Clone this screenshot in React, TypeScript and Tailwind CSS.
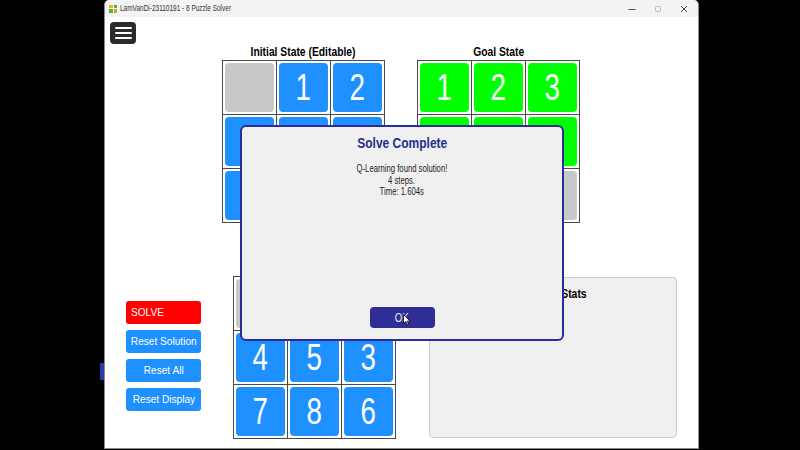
import React from "react";

function Board({ cells, color }: { cells: number[]; color: string }) {
  return (
    <div className="grid grid-cols-3 gap-[1px] bg-[#4a4a4a] p-[1px] w-fit">
      {cells.map((n, i) => (
        <div key={i} className="w-[53px] h-[53px] bg-white p-[2px]">
          <div
            className={`w-full h-full rounded-[4px] flex items-center justify-center ${
              n === 0 ? "bg-[#c8c8c8]" : color
            }`}
          >
            {n !== 0 && (
              <span className="inline-block scale-x-[0.75] text-white text-[37px] leading-none">{n}</span>
            )}
          </div>
        </div>
      ))}
    </div>
  );
}

function Btn({ label, bg, left }: { label: string; bg: string; left?: boolean }) {
  return (
    <div
      className={`w-[75px] h-[23px] rounded-[3px] flex items-center text-white text-[11px] ${bg} ${
        left ? "justify-start pl-[5px]" : "justify-center"
      }`}
    >
      <span className={`inline-block scale-x-[0.92] whitespace-nowrap ${left ? "origin-left" : ""}`}>{label}</span>
    </div>
  );
}

export default function App() {
  const initial = [0, 1, 2, 4, 5, 3, 7, 8, 6];
  const goal = [1, 2, 3, 4, 5, 6, 7, 8, 0];
  return (
    <div className="w-[800px] h-[450px] bg-black flex overflow-hidden font-['Liberation_Sans',Arial,sans-serif]">
      <div className="w-[100px] shrink-0" />
      <div className="w-[4px] shrink-0 flex flex-col">
        <div className="mt-[363px] h-[17px] bg-[#2a3aa8]" />
      </div>
      <div className="relative w-[595px] h-[449px] shrink-0 bg-white border border-t-0 border-[#8a8a8a] rounded-t-[5px] flex flex-col">
        {/* title bar */}
        <div className="h-[17px] bg-[#f3f3f3] rounded-t-[5px] flex items-center">
          <div className="ml-[4px] w-[8px] h-[8px] grid grid-cols-2 gap-[1px]">
            <div className="bg-[#e6b800]" />
            <div className="bg-[#4caf50]" />
            <div className="bg-[#4caf50]" />
            <div className="bg-[#d9a400]" />
          </div>
          <span className="ml-[3px] inline-block scale-x-[0.72] origin-left text-[9px] text-[#333] whitespace-nowrap">
            LamVanDi-23110191 - 8 Puzzle Solver
          </span>
          <div className="ml-auto flex items-center">
            <svg width="8" height="8" viewBox="0 0 8 8" className="mr-[18px]">
              <line x1="0.5" y1="4.5" x2="7.5" y2="4.5" stroke="#555" strokeWidth="1" />
            </svg>
            <svg width="8" height="8" viewBox="0 0 8 8" className="mr-[18px]">
              <rect x="1.5" y="1.5" width="5" height="5" rx="1" fill="none" stroke="#bbb" strokeWidth="1" />
            </svg>
            <svg width="8" height="8" viewBox="0 0 8 8" className="mr-[10px]">
              <line x1="1" y1="1" x2="7" y2="7" stroke="#444" strokeWidth="1" />
              <line x1="7" y1="1" x2="1" y2="7" stroke="#444" strokeWidth="1" />
            </svg>
          </div>
        </div>

        {/* hamburger */}
        <div className="mt-[5px] ml-[5px] w-[26px] h-[22px] bg-[#2b2b2b] rounded-[4px] flex flex-col items-center justify-center gap-[3px]">
          <div className="w-[17px] h-[2px] bg-white rounded" />
          <div className="w-[17px] h-[2px] bg-white rounded" />
          <div className="w-[17px] h-[2px] bg-white rounded" />
        </div>

        {/* top boards */}
        <div className="flex pl-[117px] gap-[32px]">
          <div className="flex flex-col items-center">
            <div className="h-[16px] leading-[16px] text-[12px] font-bold text-black">
              <span className="inline-block scale-x-[0.86]">Initial State (Editable)</span>
            </div>
            <Board cells={initial} color="bg-[#1e90ff]" />
          </div>
          <div className="flex flex-col items-center">
            <div className="h-[16px] leading-[16px] text-[12px] font-bold text-black">
              <span className="inline-block scale-x-[0.86]">Goal State</span>
            </div>
            <Board cells={goal} color="bg-[#00ff00]" />
          </div>
        </div>

        {/* bottom row */}
        <div className="flex items-start pl-[21px] mt-[53px]">
          <div className="mt-[25px] flex flex-col gap-[6px]">
            <Btn label="SOLVE" bg="bg-[#ff0000]" left />
            <Btn label="Reset Solution" bg="bg-[#1e90ff]" />
            <Btn label="Reset All" bg="bg-[#1e90ff]" />
            <Btn label="Reset Display" bg="bg-[#1e90ff]" />
          </div>
          <div className="ml-[32px]">
            <Board cells={initial} color="bg-[#1e90ff]" />
          </div>
          <div className="ml-[33px] mt-[1px] w-[248px] h-[161px] bg-[#f0f0f0] border border-[#cccccc] rounded-[4px] flex flex-col items-center">
            <div className="mt-[8px] text-[13px] font-bold text-black leading-[16px]">
              <span className="inline-block scale-x-[0.8] pl-[10px]">Solver Stats</span>
            </div>
          </div>
        </div>

        {/* dialog */}
        <div className="absolute left-[135px] top-[125px] w-[324px] h-[216px] bg-[#f0f0f0] border-2 border-[#2b2b9b] rounded-[6px] flex flex-col items-center">
          <div className="mt-[7px] h-[18px] leading-[18px] text-[15px] font-bold text-[#232f8c]">
            <span className="inline-block scale-x-[0.8]">Solve Complete</span>
          </div>
          <div className="mt-[11px] flex flex-col items-center text-[10px] leading-[11.7px] text-[#222]">
            <span className="inline-block scale-x-[0.77]">Q-Learning found solution!</span>
            <span className="inline-block scale-x-[0.77]">4 steps.</span>
            <span className="inline-block scale-x-[0.77]">Time: 1.604s</span>
          </div>
          <div className="mt-auto mb-[11px] relative w-[65px] h-[21px] bg-[#2e2e96] rounded-[4px] flex items-center justify-center text-[12px] text-[#e8e8ff]">
            <span className="inline-block scale-x-[0.8]">OK</span>
            <svg width="8" height="12" viewBox="0 0 8 12" className="absolute left-[33px] top-[7px]">
              <path d="M0.5 0.5 L0.5 9.5 L2.7 7.6 L4.3 11 L5.6 10.4 L4.1 7.1 L7 7 Z" fill="#fff" stroke="#000" strokeWidth="0.8" />
            </svg>
          </div>
        </div>
      </div>
    </div>
  );
}
